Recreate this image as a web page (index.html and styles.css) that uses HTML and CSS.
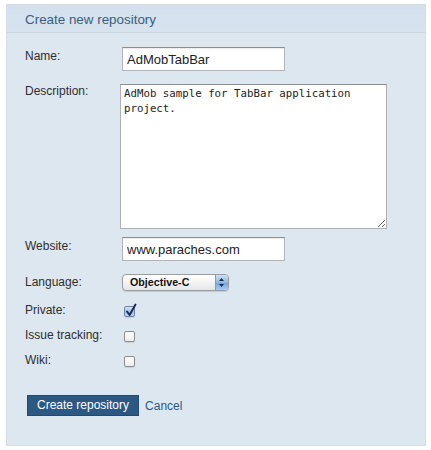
FILE: index.html
```html
<!DOCTYPE html>
<html>
<head>
<meta charset="utf-8">
<link rel="stylesheet" href="styles.css">
</head>
<body>
<div class="panel">
  <div class="panel-header">Create new repository</div>
  <form class="form">
    <div class="row row-name">
      <label class="label label-input">Name:</label>
      <input class="text-input" type="text" value="AdMobTabBar">
    </div>
    <div class="row row-desc">
      <label class="label">Description:</label>
      <textarea class="textarea">AdMob sample for TabBar application project.</textarea>
    </div>
    <div class="row row-web">
      <label class="label label-input">Website:</label>
      <input class="text-input" type="text" value="www.paraches.com">
    </div>
    <div class="row row-lang">
      <label class="label label-select">Language:</label>
      <div class="select">
        <span class="select-text">Objective-C</span>
        <span class="select-arrows">
          <svg width="13" height="15" viewBox="0 0 13 15"><path d="M4 6 L6.5 3 L9 6 Z" fill="#1c2c4a"/><path d="M4 9 L6.5 12 L9 9 Z" fill="#1c2c4a"/></svg>
        </span>
      </div>
    </div>
    <div class="row row-check row-private">
      <label class="label">Private:</label>
      <span class="checkbox checked">
        <svg width="14" height="16" viewBox="0 0 14 16"><path d="M3 9.5 L5.6 13 L11.5 2.5" fill="none" stroke="#1a2b52" stroke-width="1.9" stroke-linecap="round" stroke-linejoin="round"/></svg>
      </span>
    </div>
    <div class="row row-check">
      <label class="label">Issue tracking:</label>
      <span class="checkbox"></span>
    </div>
    <div class="row row-check">
      <label class="label">Wiki:</label>
      <span class="checkbox"></span>
    </div>
    <div class="actions">
      <button class="btn" type="button">Create repository</button>
      <a class="cancel" href="#">Cancel</a>
    </div>
  </form>
</div>
</body>
</html>
```
FILE: styles.css
```css
* { box-sizing: border-box; }
html, body { margin: 0; padding: 0; background: #ffffff; }
body { font-family: "Liberation Sans", Arial, sans-serif; color: #333333; }

.panel {
  margin: 4px 0 0 6px;
  width: 420px;
  height: 442px;
  border: 1px solid #d6dce2;
  background: #dde7f0;
}
.panel-header {
  height: 28px;
  padding: 2px 0 0 18px;
  line-height: 25px;
  font-size: 13.4px;
  color: #3a5e80;
  background: linear-gradient(#d3e1ee, #d7e3ef);
  border-bottom: 1px solid #c9d5e0;
}

.form { padding: 14px 0 0 18px; }

.row { display: flex; align-items: flex-start; }
.label {
  width: 97px;
  flex: none;
  font-size: 12px;
  line-height: 14px;
  color: #2e2e2e;
}
.label-input { margin-top: 2px; }
.label-select { margin-top: 1px; }

.row-desc { margin-top: 13px; }
.row-web { margin-top: 8px; }
.row-lang { margin-top: 13px; }
.row-private { margin-top: 12px; }
.row-check + .row-check { margin-top: 11px; }

.text-input {
  width: 163px;
  height: 24px;
  margin: 0;
  padding: 0 4px;
  font-family: "Liberation Sans", Arial, sans-serif;
  font-size: 13px;
  color: #222;
  background: #ffffff;
  border: 1px solid #b4b4b4;
  border-top-color: #8e8e8e;
  border-radius: 0;
  outline: none;
  box-shadow: inset 0 1px 1px rgba(0,0,0,0.08);
}

.textarea {
  display: block;
  width: 267px;
  height: 145px;
  margin: 0 0 0 -2px;
  padding: 2px 3px;
  font-family: "DejaVu Sans Mono", "Liberation Mono", monospace;
  font-size: 10.75px;
  line-height: 14.5px;
  color: #222;
  background: #ffffff;
  border: 1px solid #b0b0b0;
  border-top-color: #8e8e8e;
  border-radius: 0;
  outline: none;
  resize: both;
}

.select {
  display: flex;
  align-items: stretch;
  width: 107px;
  height: 17px;
  border: 1px solid #9c9c9c;
  border-radius: 4px;
  background: linear-gradient(#ffffff, #f1f1f1 60%, #e6e6e6);
  box-shadow: 0 1px 1px rgba(0,0,0,0.12);
  overflow: hidden;
}
.select-text {
  flex: 1;
  padding-left: 7px;
  font-family: "Liberation Sans", Arial, sans-serif;
  font-weight: bold;
  font-size: 10.7px;
  line-height: 15px;
  color: #111;
}
.select-arrows {
  width: 13px;
  flex: none;
  border-left: 1px solid #7f9cc0;
  background: linear-gradient(#cfe1f6, #8fb7e6 50%, #6fa2df 51%, #a9ccf2);
  display: flex;
  align-items: center;
  justify-content: center;
}
.select-arrows svg { display: block; margin-left: -1px; }

.row-check .label { margin-top: 0; }
.checkbox {
  position: relative;
  display: block;
  width: 11px;
  height: 11px;
  margin: 3px 0 0 2px;
  border: 1px solid #8c8c8c;
  border-radius: 2px;
  background: linear-gradient(#ffffff, #ececec);
  box-shadow: 0 1px 1px rgba(0,0,0,0.1);
}
.checkbox.checked {
  background: linear-gradient(#d4e4f6, #9ec0e6 55%, #b8d3f0);
  border-color: #6f86a6;
}
.checkbox svg {
  position: absolute;
  left: -1px;
  top: -5px;
}

.actions {
  display: flex;
  align-items: center;
  margin-top: 28px;
  margin-left: 2px;
}
.btn {
  height: 21px;
  margin: 0;
  padding: 0 9px;
  font-family: "Liberation Sans", Arial, sans-serif;
  font-size: 12px;
  line-height: 19px;
  color: #ffffff;
  background: #2c5884;
  border: 1px solid #24496f;
  border-radius: 0;
  cursor: pointer;
}
.cancel {
  margin-left: 6px;
  font-size: 12px;
  color: #2c5884;
  text-decoration: none;
}
```
